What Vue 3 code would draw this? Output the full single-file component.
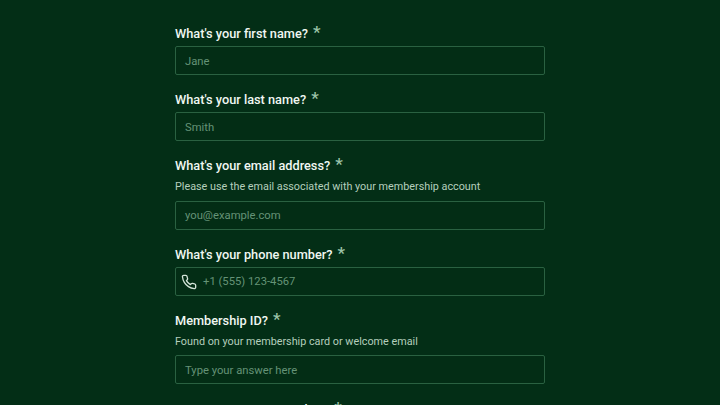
<script setup>
const fields = [
  { label: "What's your first name?", placeholder: 'Jane' },
  { label: "What's your last name?", placeholder: 'Smith' },
  { label: "What's your email address?", hint: 'Please use the email associated with your membership account', placeholder: 'you@example.com' },
  { label: "What's your phone number?", placeholder: '+1 (555) 123-4567', phone: true },
  { label: 'Membership ID?', hint: 'Found on your membership card or welcome email', placeholder: 'Type your answer here' },
  { label: 'Are you a current member?', placeholder: '' },
]
</script>

<template>
  <main class="page">
    <form class="form">
      <div v-for="f in fields" :key="f.label" class="field">
        <div class="label"><span>{{ f.label }}</span><span class="star">*</span></div>
        <p v-if="f.hint" class="hint">{{ f.hint }}</p>
        <div class="input">
          <svg v-if="f.phone" class="icon" viewBox="0 0 24 24" fill="none" stroke="currentColor" stroke-width="2" stroke-linecap="round" stroke-linejoin="round">
            <path d="M22 16.92v3a2 2 0 0 1-2.18 2 19.79 19.79 0 0 1-8.63-3.07 19.5 19.5 0 0 1-6-6 19.79 19.79 0 0 1-3.07-8.67A2 2 0 0 1 4.11 2h3a2 2 0 0 1 2 1.72 12.84 12.84 0 0 0 .7 2.81 2 2 0 0 1-.45 2.11L8.09 9.91a16 16 0 0 0 6 6l1.27-1.27a2 2 0 0 1 2.11-.45 12.84 12.84 0 0 0 2.81.7A2 2 0 0 1 22 16.92z"/>
          </svg>
          <span class="ph">{{ f.placeholder }}</span>
        </div>
      </div>
    </form>
  </main>
</template>

<style>
html, body { margin: 0; background: #032e16; overflow: hidden; }
</style>

<style scoped>
.page {
  height: 405px;
  overflow: hidden;
  background: #032e16;
  font-family: Roboto, sans-serif;
}
.form {
  width: 370px;
  margin: 0 auto;
  padding-top: 23px;
  display: flex;
  flex-direction: column;
  gap: 14.2px;
}
.field { display: flex; flex-direction: column; }
.label {
  display: flex;
  align-items: flex-start;
  gap: 5px;
  height: 23px;
  line-height: 22px;
  font-size: 12.75px;
  font-weight: 500;
  color: #f0f7f2;
}
.star { font-size: 17px; line-height: 17px; margin-top: 1px; font-weight: 500; color: #9cc4a9; }
.hint {
  margin: 0.5px 0 5.8px;
  height: 16px;
  line-height: 16px;
  font-size: 10.8px;
  color: #b5cfbd;
}
.input {
  box-sizing: border-box;
  height: 29px;
  display: flex;
  align-items: center;
  gap: 6px;
  padding: 1px 9px 0;
  border: 1px solid #2a6141;
  border-radius: 2px;
  background: #032d15;
}
.icon { width: 16px; height: 16px; margin-left: -4px; color: #d3e4d8; flex: none; }
.ph { font-size: 11.25px; color: #659377; }
</style>
